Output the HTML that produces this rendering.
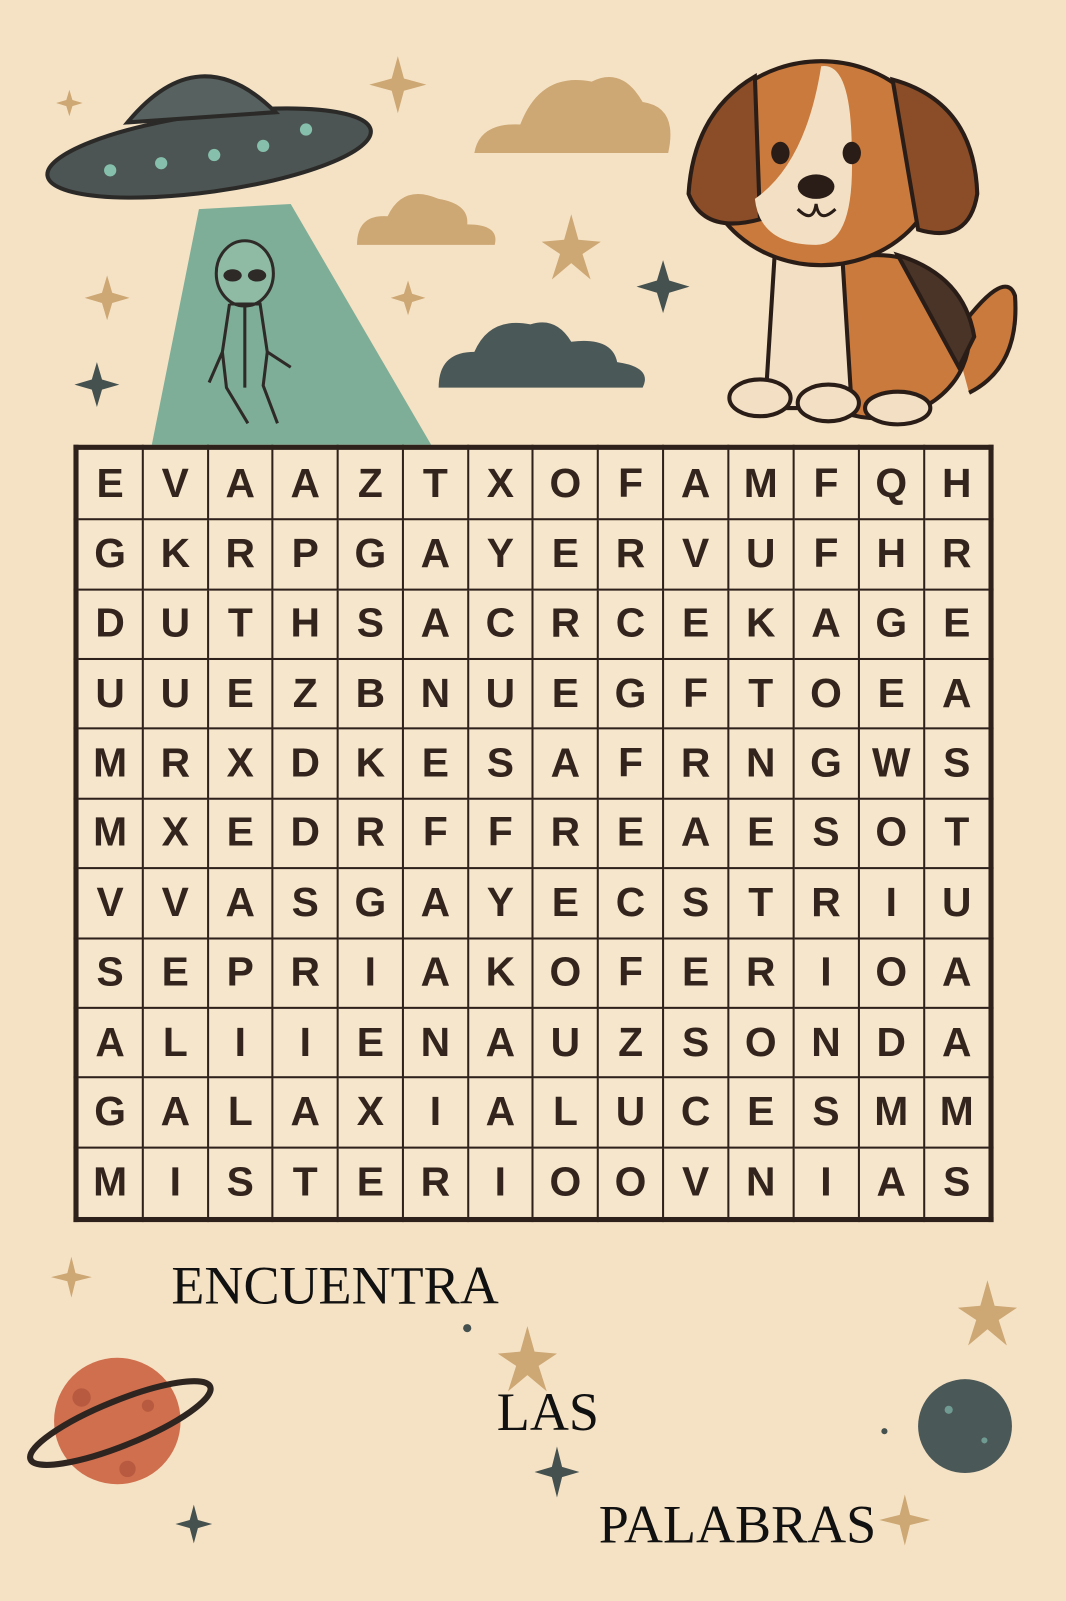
<!DOCTYPE html>
<html><head><meta charset="utf-8"><style>
body{margin:0;width:1066px;height:1600px;background:#f5e2c4;position:relative;overflow:hidden;font-family:"Liberation Sans",sans-serif}
#w{position:absolute;left:0;top:0;width:1045px;height:1569px;transform:scale(1.0201);transform-origin:0 0}
svg.bg{position:absolute;left:0;top:0}
table{position:absolute;left:72px;top:436px;width:902px;height:762px;border-collapse:collapse;border:5px solid #2e211b;background:#f6e6cb}
td{border:2px solid #2e211b;text-align:center;font-weight:bold;font-size:40px;color:#33251e;padding:0;width:64px}
.t{position:absolute;font-family:"Liberation Serif",serif;font-size:53px;color:#111;line-height:1}
</style></head><body><div id="w">
<svg class="bg" width="1045" height="1569" viewBox="0 0 1045 1569">
<polygon points="195,205 285,200 425,440 148,440" fill="#7fae98"/>
<g fill="#8fbaa3" stroke="#2e2a28" stroke-width="3">
<ellipse cx="240" cy="268" rx="28" ry="32"/>
<path d="M225 298 L255 298 L262 345 L285 360 M262 345 L258 378 L272 415 M225 298 L218 345 L205 375 M218 345 L222 380 L243 415 M240 300 L240 380" fill="none"/>
</g>
<ellipse cx="228" cy="270" rx="9" ry="6" fill="#2e2a28"/><ellipse cx="252" cy="270" rx="9" ry="6" fill="#2e2a28"/>
<ellipse cx="205" cy="150" rx="160" ry="38" fill="#4c5553" stroke="#2b2a28" stroke-width="4" transform="rotate(-8 205 150)"/>
<path d="M125 120 Q195 35 270 110 Z" fill="#57615f" stroke="#2b2a28" stroke-width="4"/>
<g fill="#86c0ac"><circle cx="108" cy="167" r="6"/><circle cx="158" cy="160" r="6"/><circle cx="210" cy="152" r="6"/><circle cx="258" cy="143" r="6"/><circle cx="300" cy="127" r="6"/></g>
<path d="M465 150 Q470 120 510 122 Q530 70 580 80 Q610 65 630 100 Q665 105 655 150 Z" fill="#cda774"/>
<path d="M350 240 Q350 210 380 212 Q395 180 430 195 Q460 200 458 220 Q490 220 485 240 Z" fill="#cda774"/>
<path d="M430 380 Q430 345 465 345 Q480 310 520 318 Q545 310 560 335 Q600 330 605 355 Q640 360 630 380 Z" fill="#4b5858"/>
<g fill="#cda774">
<path d="M390 55 l6 22 22 6 -22 6 -6 22 -6 -22 -22 -6 22 -6z"/>
<path d="M68 88 l3 10 10 3 -10 3 -3 10 -3 -10 -10 -3 10 -3z"/>
<path d="M105 270 l5 17 17 5 -17 5 -5 17 -5 -17 -17 -5 17 -5z"/>
<path d="M560 210 l7 25 22 2 -18 12 8 25 -19 -16 -19 16 8 -25 -18 -12 22 -2z"/>
<path d="M400 275 l4 13 13 4 -13 4 -4 13 -4 -13 -13 -4 13 -4z"/>
<path d="M70 1232 l4 16 16 4 -16 4 -4 16 -4 -16 -16 -4 16 -4z"/>
<path d="M517 1300 l7 25 22 2 -18 12 8 25 -19 -16 -19 16 8 -25 -18 -12 22 -2z"/>
<path d="M968 1255 l7 25 22 2 -18 12 8 25 -19 -16 -19 16 8 -25 -18 -12 22 -2z"/>
<path d="M887 1465 l5 20 20 5 -20 5 -5 20 -5 -20 -20 -5 20 -5z"/>
</g>
<g fill="#44514f">
<path d="M650 255 l6 20 20 6 -20 6 -6 20 -6 -20 -20 -6 20 -6z"/>
<path d="M95 355 l5 17 17 5 -17 5 -5 17 -5 -17 -17 -5 17 -5z"/>
<path d="M546 1418 l5 20 17 5 -17 5 -5 20 -5 -20 -17 -5 17 -5z"/>
<path d="M190 1475 l4 15 14 4 -14 4 -4 15 -4 -15 -14 -4 14 -4z"/>
<circle cx="458" cy="1302" r="4"/><circle cx="867" cy="1403" r="3"/>
</g>
<circle cx="115" cy="1393" r="62" fill="#d06f4e"/>
<g fill="#b75a40"><circle cx="80" cy="1370" r="9"/><circle cx="145" cy="1378" r="6"/><circle cx="125" cy="1440" r="8"/></g>
<ellipse cx="118" cy="1395" rx="95" ry="22" fill="none" stroke="#2e2420" stroke-width="6" transform="rotate(-22 118 1395)"/>
<circle cx="946" cy="1398" r="46" fill="#4b5858"/>
<g fill="#6f9b92"><circle cx="930" cy="1382" r="4"/><circle cx="965" cy="1412" r="3"/></g>
<g stroke="#2a1d17" stroke-width="4">
<path d="M935 330 Q985 260 995 290 Q1000 360 950 385" fill="#c97a3c"/>
<ellipse cx="860" cy="330" rx="90" ry="80" fill="#c97a3c"/>
<path d="M880 250 Q945 270 955 330 L940 360 Z" fill="#4a3428"/>
<path d="M760 240 L825 240 L835 400 L750 400 Z" fill="#f3e0c4"/>
<ellipse cx="805" cy="160" rx="115" ry="100" fill="#c97a3c"/>
<path d="M740 75 Q680 110 675 190 Q690 230 745 215 Z" fill="#8a4d28"/>
<path d="M875 78 Q955 100 958 190 Q950 240 900 225 Z" fill="#8a4d28"/>
<path d="M805 65 Q835 60 835 150 Q838 240 800 240 Q745 240 740 195 Q790 160 805 65Z" fill="#f3e0c4" stroke="none"/>
<ellipse cx="745" cy="390" rx="30" ry="18" fill="#f3e0c4"/>
<ellipse cx="812" cy="395" rx="30" ry="18" fill="#f3e0c4"/>
<ellipse cx="880" cy="400" rx="32" ry="16" fill="#f3e0c4"/>
</g>
<ellipse cx="765" cy="150" rx="9" ry="11" fill="#2a1d17"/><ellipse cx="835" cy="150" rx="9" ry="11" fill="#2a1d17"/>
<ellipse cx="800" cy="183" rx="18" ry="12" fill="#2a1d17"/>
<path d="M782 205 Q797 220 800 200 Q803 220 819 205" fill="none" stroke="#2a1d17" stroke-width="3"/>
</svg>
<table>
<tr><td>E</td><td>V</td><td>A</td><td>A</td><td>Z</td><td>T</td><td>X</td><td>O</td><td>F</td><td>A</td><td>M</td><td>F</td><td>Q</td><td>H</td></tr>
<tr><td>G</td><td>K</td><td>R</td><td>P</td><td>G</td><td>A</td><td>Y</td><td>E</td><td>R</td><td>V</td><td>U</td><td>F</td><td>H</td><td>R</td></tr>
<tr><td>D</td><td>U</td><td>T</td><td>H</td><td>S</td><td>A</td><td>C</td><td>R</td><td>C</td><td>E</td><td>K</td><td>A</td><td>G</td><td>E</td></tr>
<tr><td>U</td><td>U</td><td>E</td><td>Z</td><td>B</td><td>N</td><td>U</td><td>E</td><td>G</td><td>F</td><td>T</td><td>O</td><td>E</td><td>A</td></tr>
<tr><td>M</td><td>R</td><td>X</td><td>D</td><td>K</td><td>E</td><td>S</td><td>A</td><td>F</td><td>R</td><td>N</td><td>G</td><td>W</td><td>S</td></tr>
<tr><td>M</td><td>X</td><td>E</td><td>D</td><td>R</td><td>F</td><td>F</td><td>R</td><td>E</td><td>A</td><td>E</td><td>S</td><td>O</td><td>T</td></tr>
<tr><td>V</td><td>V</td><td>A</td><td>S</td><td>G</td><td>A</td><td>Y</td><td>E</td><td>C</td><td>S</td><td>T</td><td>R</td><td>I</td><td>U</td></tr>
<tr><td>S</td><td>E</td><td>P</td><td>R</td><td>I</td><td>A</td><td>K</td><td>O</td><td>F</td><td>E</td><td>R</td><td>I</td><td>O</td><td>A</td></tr>
<tr><td>A</td><td>L</td><td>I</td><td>I</td><td>E</td><td>N</td><td>A</td><td>U</td><td>Z</td><td>S</td><td>O</td><td>N</td><td>D</td><td>A</td></tr>
<tr><td>G</td><td>A</td><td>L</td><td>A</td><td>X</td><td>I</td><td>A</td><td>L</td><td>U</td><td>C</td><td>E</td><td>S</td><td>M</td><td>M</td></tr>
<tr><td>M</td><td>I</td><td>S</td><td>T</td><td>E</td><td>R</td><td>I</td><td>O</td><td>O</td><td>V</td><td>N</td><td>I</td><td>A</td><td>S</td></tr>
</table>
<div class="t" style="left:168px;top:1235px">ENCUENTRA</div>
<div class="t" style="left:487px;top:1359px">LAS</div>
<div class="t" style="left:587px;top:1469px">PALABRAS</div>
</div></body></html>
